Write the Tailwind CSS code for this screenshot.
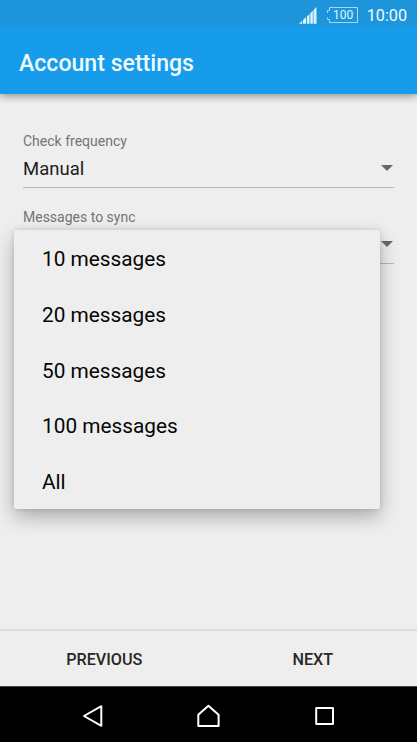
<!DOCTYPE html>
<html lang="en">
<head>
<meta charset="utf-8">
<meta name="viewport" content="width=device-width, initial-scale=1">
<title>Account settings</title>
<script src="https://cdn.jsdelivr.net/npm/@tailwindcss/browser@4"></script>
</head>
<body class="bg-[#eeeeee] font-[Roboto,sans-serif]">
<div class="relative flex h-[742px] w-[417px] flex-col overflow-hidden bg-[#eeeeee]">
  <header class="z-0 h-[94px] shrink-0 bg-[#169ceb] text-[#effaff] shadow-[0_2px_8px_rgba(0,0,0,0.4)]">
    <div class="flex h-[30px] items-center justify-end bg-linear-to-b from-[#1e95da] from-75% to-[#169ceb] pr-[10px]">
      <svg class="mr-[9px] h-[18px] w-[18px]" viewBox="0 0 18 18" fill="#d9f4fe"><path d="M0 17.7L3.2 14.7V17.7ZM4 14L7 11.1V17.7H4ZM7.9 10.5L10.5 7.9V17.7H7.9ZM11.3 7.2L13.8 4.7V17.7H11.3ZM14.5 4L17.5 1V17.7H14.5Z"/></svg>
      <div class="relative mr-[9px] flex h-[16px] w-[32px] items-center justify-center pl-[3px]">
        <svg class="absolute inset-0 h-[16px] w-[32px]" viewBox="0 0 32 16" fill="none" stroke="#a0d9fa" stroke-width="1"><path d="M3.5 .5H31.5V15.5H3.5V12.5H1.5V10.5M1.5 6V3.5H3.5V.5"/></svg>
        <span class="text-[12px] leading-none text-[#dff5ff]">100</span>
      </div>
      <span class="pt-[2px] text-[16.2px] leading-none">10:00</span>
    </div>
    <h1 class="flex h-[64px] items-center pl-[19px] pt-[3px] text-[23.1px] font-medium leading-none">Account settings</h1>
  </header>

  <main class="flex grow flex-col px-[23px] pt-[39px]">
    <section class="h-[76px]">
      <div class="text-[14px] leading-[17px] text-[#747474]">Check frequency</div>
      <div class="flex h-[38px] items-center justify-between border-b border-[#b7b7b7] pr-[1px]">
        <span class="pt-[2px] text-[18.5px] text-[#212121]">Manual</span>
        <svg class="mb-[2px] h-[6px] w-[12px]" viewBox="0 0 12 6"><path d="M0 0H12L6 6Z" fill="#686868"/></svg>
      </div>
    </section>
    <section>
      <div class="text-[14px] leading-[17px] text-[#747474]">Messages to sync</div>
      <div class="flex h-[38px] items-center justify-end border-b border-[#b7b7b7] pr-[1px]">
        <svg class="mb-[2px] h-[6px] w-[12px]" viewBox="0 0 12 6"><path d="M0 0H12L6 6Z" fill="#686868"/></svg>
      </div>
    </section>
  </main>

  <div class="absolute left-[14px] top-[230px] z-10 flex h-[278.5px] w-[366px] flex-col rounded-[2px] bg-[#eeeeee] text-[20.8px] text-[#050505] shadow-[0_8px_19px_rgba(0,0,0,0.28),0_0_5px_rgba(0,0,0,0.12)]" role="listbox">
    <div class="flex flex-1 items-center pl-[28px] pt-[4px]" role="option">10 messages</div>
    <div class="flex flex-1 items-center pl-[28px] pt-[4px]" role="option">20 messages</div>
    <div class="flex flex-1 items-center pl-[28px] pt-[4px]" role="option">50 messages</div>
    <div class="flex flex-1 items-center pl-[28px] pt-[4px]" role="option">100 messages</div>
    <div class="flex flex-1 items-center pl-[28px] pt-[4px]" role="option">All</div>
  </div>

  <div class="grid h-[57px] shrink-0 grid-cols-2 border-t-2 border-[#dddddd] text-[16.2px] font-medium text-[#272727]">
    <button class="pt-[3px]">PREVIOUS</button>
    <button class="pt-[3px]">NEXT</button>
  </div>
  <nav class="flex h-[56px] shrink-0 items-center border-t border-[#4a4a4a] bg-black pl-[82px] pt-[3px]">
    <svg class="h-[24px] w-[22px]" viewBox="0 0 22 24" fill="none" stroke="#fff" stroke-width="2" stroke-linejoin="round"><path d="M19.3 2.2V21.8L2 12Z"/></svg>
    <svg class="ml-[92px] h-[24px] w-[24px]" viewBox="0 0 24 24" fill="none" stroke="#fff" stroke-width="2" stroke-linejoin="round"><path d="M2.3 22V10.8L12.4 1.8L22.6 10.8V22Z"/></svg>
    <svg class="ml-[94px] h-[20px] w-[20px]" viewBox="0 0 20 20" fill="none" stroke="#fff" stroke-width="2" stroke-linejoin="round"><path d="M2.2 2H19V18H2.2Z"/></svg>
  </nav>
</div>
</body>
</html>
